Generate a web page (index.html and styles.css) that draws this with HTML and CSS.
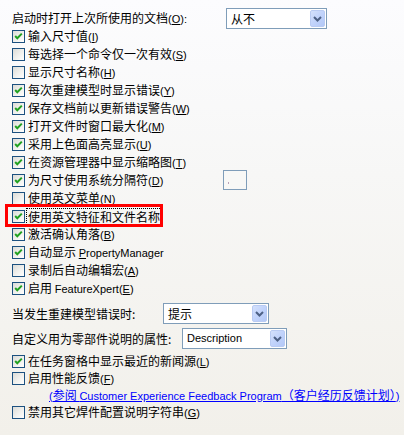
FILE: index.html
```html
<!DOCTYPE html>
<html lang="zh-CN">
<head>
<meta charset="utf-8">
<link rel="stylesheet" href="styles.css">
</head>
<body>
<div class="page">
  <div class="field first">
    <span class="flabel w1">启动时打开上次所使用的文档<span class="l">(<u>O</u>):</span></span>
    <div class="select s1"><span class="val">从不</span><span class="btn"><svg viewBox="0 0 9 6" width="9" height="6"><path d="M1 1 L4.5 4.5 L8 1" /></svg></span></div>
  </div>

  <div class="list top">
    <div class="row"><span class="cb"><svg viewBox="0 0 11 11"><path d="M2.2 5 L4.3 7.3 L8.8 2.6"/></svg></span><span class="txt">输入尺寸值<span class="l">(<u>I</u>)</span></span></div>
    <div class="row"><span class="cb"></span><span class="txt">每选择一个命令仅一次有效<span class="l">(<u>S</u>)</span></span></div>
    <div class="row"><span class="cb"></span><span class="txt">显示尺寸名称<span class="l">(<u>H</u>)</span></span></div>
    <div class="row"><span class="cb"><svg viewBox="0 0 11 11"><path d="M2.2 5 L4.3 7.3 L8.8 2.6"/></svg></span><span class="txt">每次重建模型时显示错误<span class="l">(<u>Y</u>)</span></span></div>
    <div class="row"><span class="cb"><svg viewBox="0 0 11 11"><path d="M2.2 5 L4.3 7.3 L8.8 2.6"/></svg></span><span class="txt">保存文档前以更新错误警告<span class="l">(<u>W</u>)</span></span></div>
    <div class="row"><span class="cb"><svg viewBox="0 0 11 11"><path d="M2.2 5 L4.3 7.3 L8.8 2.6"/></svg></span><span class="txt">打开文件时窗口最大化<span class="l">(<u>M</u>)</span></span></div>
    <div class="row"><span class="cb"><svg viewBox="0 0 11 11"><path d="M2.2 5 L4.3 7.3 L8.8 2.6"/></svg></span><span class="txt">采用上色面高亮显示<span class="l">(<u>U</u>)</span></span></div>
    <div class="row"><span class="cb"><svg viewBox="0 0 11 11"><path d="M2.2 5 L4.3 7.3 L8.8 2.6"/></svg></span><span class="txt">在资源管理器中显示缩略图<span class="l">(<u>T</u>)</span></span></div>
    <div class="row"><span class="cb"><svg viewBox="0 0 11 11"><path d="M2.2 5 L4.3 7.3 L8.8 2.6"/></svg></span><span class="txt">为尺寸使用系统分隔符<span class="l">(<u>D</u>)</span></span><span class="sepbox"><span class="caret"></span></span></div>
    <div class="row"><span class="cb"></span><span class="txt">使用英文菜单<span class="l">(<u>N</u>)</span></span></div>
    <div class="row hl"><span class="cb"><svg viewBox="0 0 11 11"><path d="M2.2 5 L4.3 7.3 L8.8 2.6"/></svg></span><span class="txt focus">使用英文特征和文件名称</span></div>
    <div class="row"><span class="cb"><svg viewBox="0 0 11 11"><path d="M2.2 5 L4.3 7.3 L8.8 2.6"/></svg></span><span class="txt">激活确认角落<span class="l">(<u>B</u>)</span></span></div>
    <div class="row"><span class="cb"><svg viewBox="0 0 11 11"><path d="M2.2 5 L4.3 7.3 L8.8 2.6"/></svg></span><span class="txt">自动显示 <span class="l"><u>P</u>ropertyManager</span></span></div>
    <div class="row"><span class="cb"></span><span class="txt">录制后自动编辑宏<span class="l">(<u>A</u>)</span></span></div>
    <div class="row"><span class="cb"><svg viewBox="0 0 11 11"><path d="M2.2 5 L4.3 7.3 L8.8 2.6"/></svg></span><span class="txt">启用 <span class="l">FeatureXpert(<u>E</u>)</span></span></div>
  </div>

  <div class="field gap g1">
    <span class="flabel w2">当发生重建模型错误时:</span>
    <div class="select s2"><span class="val">提示</span><span class="btn"><svg viewBox="0 0 9 6" width="9" height="6"><path d="M1 1 L4.5 4.5 L8 1" /></svg></span></div>
  </div>
  <div class="field gap">
    <span class="flabel w3">自定义用为零部件说明的属性:</span>
    <div class="select s3"><span class="val l">Description</span><span class="btn"><svg viewBox="0 0 9 6" width="9" height="6"><path d="M1 1 L4.5 4.5 L8 1" /></svg></span></div>
  </div>

  <div class="list bottom">
    <div class="row"><span class="cb"><svg viewBox="0 0 11 11"><path d="M2.2 5 L4.3 7.3 L8.8 2.6"/></svg></span><span class="txt">在任务窗格中显示最近的新闻源<span class="l">(<u>L</u>)</span></span></div>
    <div class="row"><span class="cb"></span><span class="txt">启用性能反馈<span class="l">(<u>F</u>)</span></span></div>
    <div class="row linkrow"><a class="link" href="#"><span class="l">(</span>参阅 <span class="l">Customer Experience Feedback Program</span>（客户经历反馈计划）<span class="l">)</span></a></div>
    <div class="row"><span class="cb"></span><span class="txt">禁用其它焊件配置说明字符串<span class="l">(<u>G</u>)</span></span></div>
  </div>
</div>
</body>
</html>
```

FILE: styles.css
```css
html, body {
  margin: 0;
  padding: 0;
}
body {
  width: 404px;
  height: 435px;
  overflow: hidden;
  background: linear-gradient(to bottom, #fcfcfe 0%, #f7f7f6 40%, #f2f0ea 100%);
  font-family: "Noto Sans CJK SC", "Liberation Sans", sans-serif;
  font-size: 12px;
  color: #000;
}
.page {
  padding-top: 8px;
}
.l {
  font-family: "Liberation Sans", "Noto Sans CJK SC", sans-serif;
  font-size: 11px;
}
u {
  text-decoration: underline;
  text-underline-offset: 1px;
}
.field {
  display: flex;
  align-items: center;
  height: 21px;
  padding-left: 12px;
}
.field.gap {
  margin-top: 4px;
}
.field.g1 {
  margin-top: 6px;
}
.flabel {
  line-height: 14px;
  white-space: nowrap;
}
.w1 { width: 214px; }
.w2 { width: 151px; }
.w3 { width: 170px; }
.select {
  box-sizing: border-box;
  height: 21px;
  border: 1px solid #7f9db9;
  background: #fff;
  display: flex;
  align-items: stretch;
  padding: 1px;
}
.s1 { width: 101px; }
.s2 { width: 106px; }
.s3 { width: 105px; }
.val {
  flex: 1;
  padding-left: 3px;
  line-height: 17px;
  white-space: nowrap;
  overflow: hidden;
}
.val.l {
  font-size: 11px;
}
.btn {
  width: 15px;
  box-sizing: border-box;
  border: 1px solid #b9cbf3;
  border-radius: 2px;
  background: linear-gradient(to bottom right, #d4e1fc 0%, #c1d3fb 50%, #b3c8f7 100%);
  display: flex;
  align-items: center;
  justify-content: center;
}
.btn svg {
  display: block;
  fill: none;
  stroke: #4d6185;
  stroke-width: 2;
}
.list {
  display: flex;
  flex-direction: column;
  padding-left: 12px;
}
.list.top {
  margin-top: -2px;
}
.list.bottom {
  margin-top: 4px;
}
.row {
  display: flex;
  align-items: center;
  height: 18px;
  white-space: nowrap;
}
.bottom .row {
  height: 17px;
}
.cb {
  box-sizing: border-box;
  width: 13px;
  height: 13px;
  flex: none;
  border: 1px solid #1c5180;
  background: linear-gradient(to bottom right, #dcdcd7 0%, #f1f1ee 55%, #ffffff 100%);
  display: flex;
}
.cb svg {
  width: 11px;
  height: 11px;
  display: block;
  fill: none;
  stroke: #21a121;
  stroke-width: 2;
}
.txt {
  margin-left: 2px;
  padding: 0 1px;
  line-height: 15px;
}
.txt.focus {
  outline: 1px dotted #000;
  outline-offset: 0;
}
.hl {
  position: relative;
}
.hl::after {
  content: "";
  position: absolute;
  left: -7px;
  top: -3px;
  width: 158px;
  height: 23px;
  box-sizing: border-box;
  border: 3px solid #ff0000;
  pointer-events: none;
}
.sepbox {
  box-sizing: border-box;
  width: 24px;
  height: 20px;
  margin-left: 59px;
  border: 1px solid #7f9db9;
  background: #f8f8f6;
  display: flex;
  align-items: flex-end;
  padding: 0 0 5px 4px;
}
.caret {
  width: 1px;
  height: 2px;
  background: #b9a0b8;
}
.linkrow {
  padding-left: 37px;
}
.link {
  color: #0000ff;
  text-decoration: underline;
  line-height: 15px;
}
```
